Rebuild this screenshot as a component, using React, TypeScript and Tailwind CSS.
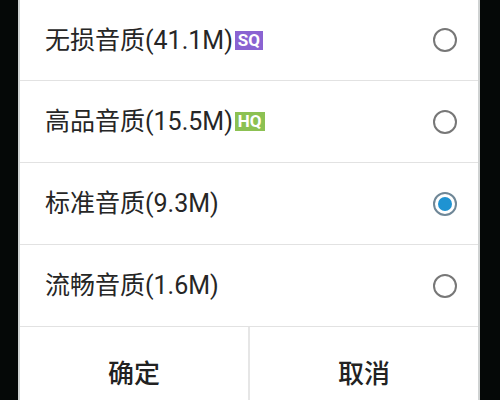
import React, { useState } from 'react';

const options = [
  { label: '无损音质(41.1M)', badge: 'SQ', badgeClass: 'bg-[#8a63d2]' },
  { label: '高品音质(15.5M)', badge: 'HQ', badgeClass: 'bg-[#8cc152]' },
  { label: '标准音质(9.3M)' },
  { label: '流畅音质(1.6M)' },
];

export default function App() {
  const [selected, setSelected] = useState(2);

  return (
    <div
      className="w-[500px] h-[400px] overflow-hidden bg-[#050807] flex"
      style={{ fontFamily: 'Roboto, "Noto Sans CJK SC", sans-serif' }}
    >
      <div className="ml-[18px] w-[462px] h-[420px] shrink-0 flex flex-col bg-white border-x-2 border-[#cfd2d2]">
        {options.map((o, i) => (
          <button
            key={o.label}
            onClick={() => setSelected(i)}
            className={`${i === 0 ? 'h-[81px]' : 'h-[82px]'} shrink-0 flex items-center pl-[25px] pr-[21px] border-b border-[#e2e2e2] text-left`}
          >
            <span className="text-[25px] text-[#262626] leading-none">{o.label}</span>
            {o.badge && (
              <span
                className={`ml-[2px] px-[3px] h-[19px] flex items-center text-[17px] font-bold text-white leading-none ${o.badgeClass}`}
              >
                {o.badge}
              </span>
            )}
            <span className="ml-auto">
              {selected === i ? (
                <span className="w-6 h-6 rounded-full border-2 border-[#6f8797] flex items-center justify-center">
                  <span className="w-[14px] h-[14px] rounded-full bg-[#1f93d2]" />
                </span>
              ) : (
                <span className="block w-6 h-6 rounded-full border-2 border-[#777]" />
              )}
            </span>
          </button>
        ))}
        <div className="flex h-[92px] shrink-0">
          <button className="flex-1 flex items-center justify-center pt-[2px] border-r-2 border-[#e6e6e6] text-[26px] text-[#222] font-medium">
            确定
          </button>
          <button className="flex-1 flex items-center justify-center pt-[2px] text-[26px] text-[#222] font-medium">
            取消
          </button>
        </div>
      </div>
    </div>
  );
}
